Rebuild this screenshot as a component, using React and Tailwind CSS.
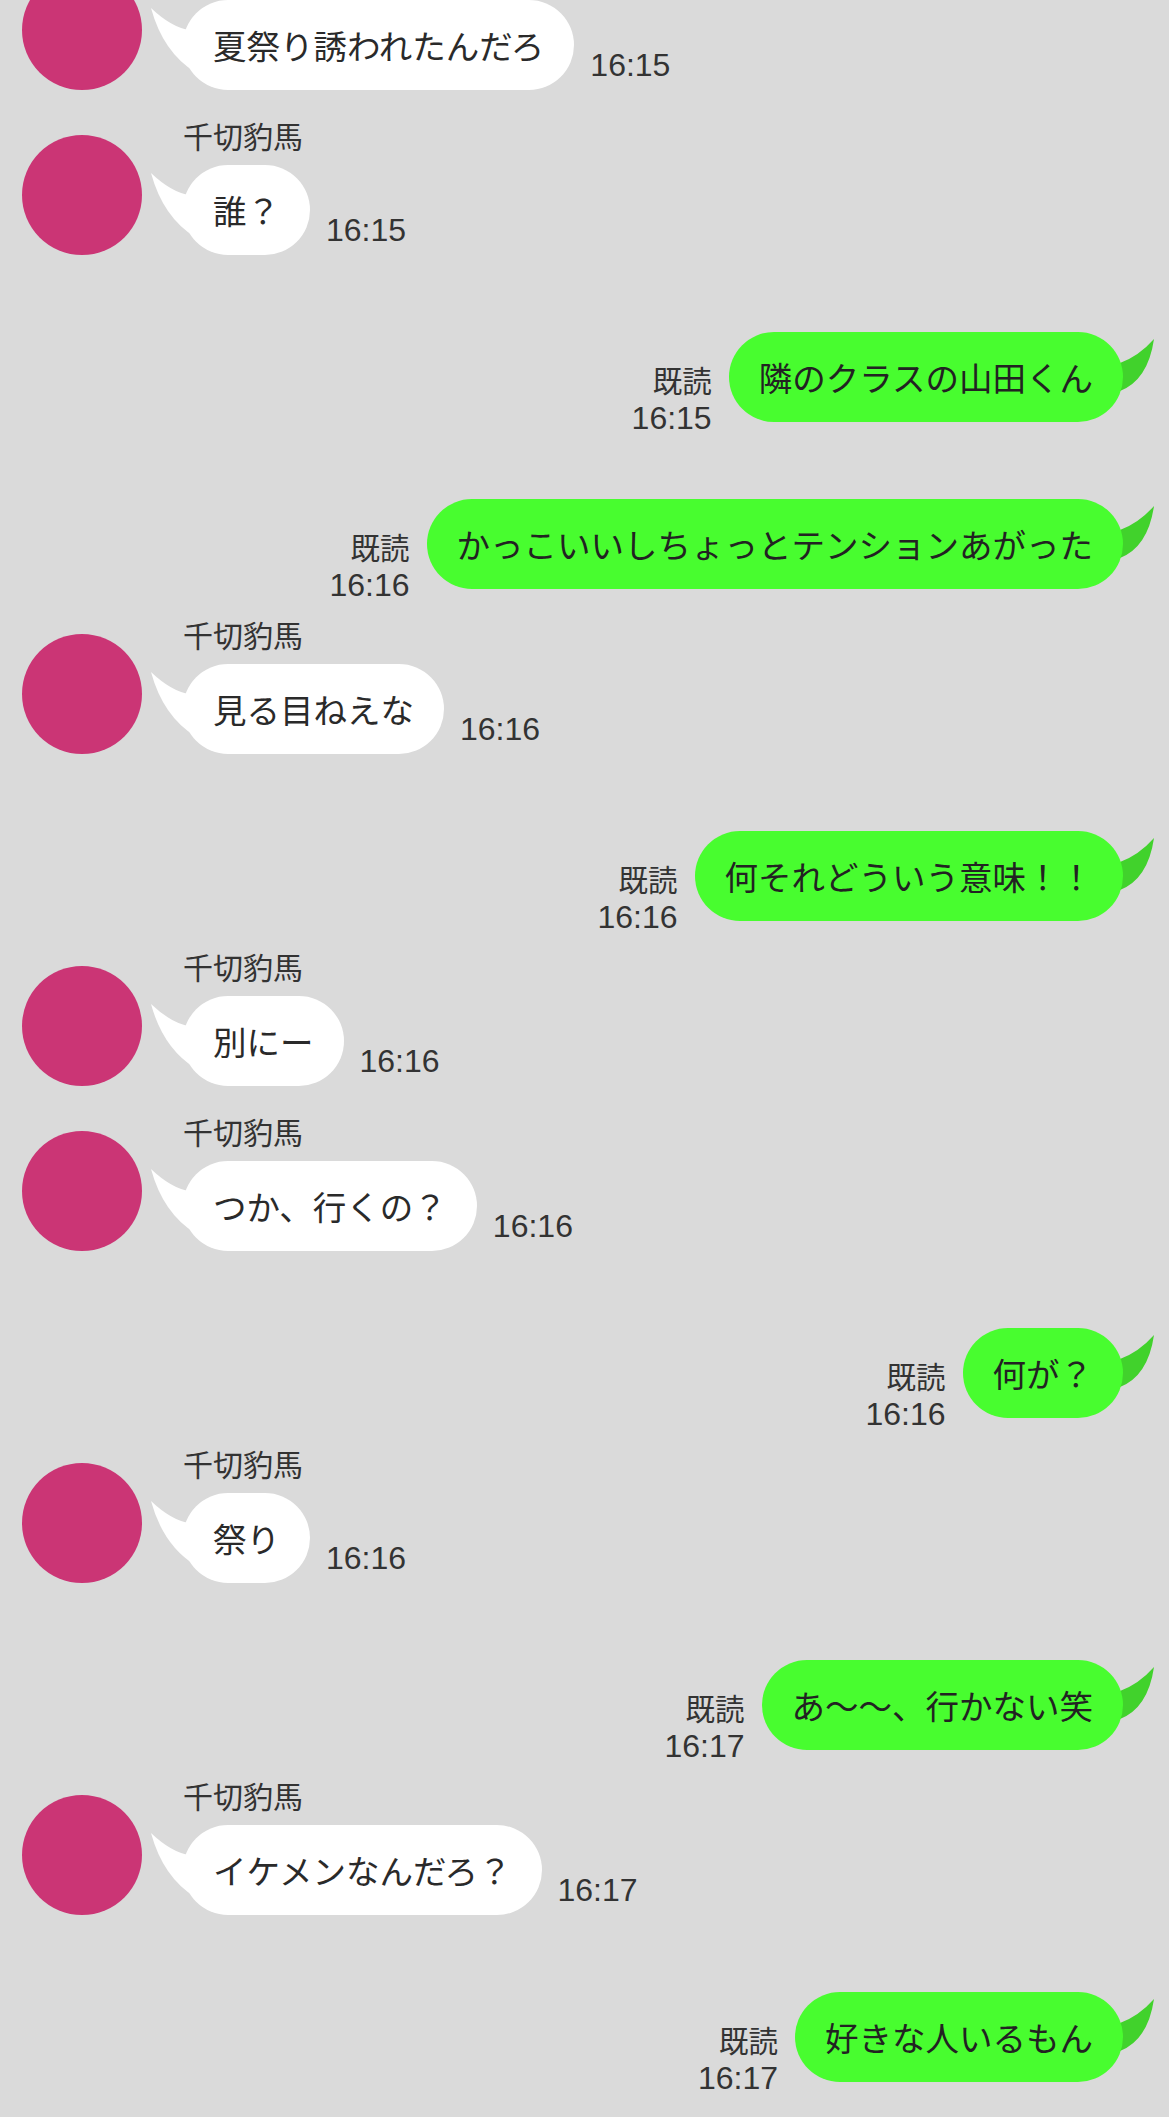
import React from 'react';

const messages = [
  { side: 'left', text: '夏祭り誘われたんだろ', time: '16:15', noName: true },
  { side: 'left', text: '誰？', time: '16:15' },
  { side: 'right', text: '隣のクラスの山田くん', time: '16:15' },
  { side: 'right', text: 'かっこいいしちょっとテンションあがった', time: '16:16' },
  { side: 'left', text: '見る目ねえな', time: '16:16' },
  { side: 'right', text: '何それどういう意味！！', time: '16:16' },
  { side: 'left', text: '別にー', time: '16:16' },
  { side: 'left', text: 'つか、行くの？', time: '16:16' },
  { side: 'right', text: '何が？', time: '16:16' },
  { side: 'left', text: '祭り', time: '16:16' },
  { side: 'right', text: 'あ〜〜、行かない笑', time: '16:17' },
  { side: 'left', text: 'イケメンなんだろ？', time: '16:17' },
  { side: 'right', text: '好きな人いるもん', time: '16:17' },
];

function LeftMessage({ text, time, noName }) {
  return (
    <div className="mt-[30px] flex items-end pl-[22px]">
      <div className="h-[120px] w-[120px] shrink-0 rounded-full bg-[#cb3575]" />
      <div className="ml-[41px] flex flex-col">
        {!noName && <div className="mb-[15px] text-[30px] leading-[30px] text-[#333]">千切豹馬</div>}
        <div className="flex items-end">
          <div className="relative">
            <svg className="absolute left-[-34px] top-0" width="50" height="80" viewBox="0 0 50 80">
              <path d="M2 8 Q22 27 40 30 L46 72 Q14 52 2 8 Z" fill="#fff" />
            </svg>
            <div className="relative whitespace-nowrap rounded-full bg-white px-[30px] py-[22px] text-[33.5px] leading-[46px] text-[#2a2a2a]">
              {text}
            </div>
          </div>
          <span className="mb-[5px] ml-4 font-['Liberation_Sans','Noto_Sans_CJK_JP',sans-serif] text-[32px] leading-[39px] text-[#333]">
            {time}
          </span>
        </div>
      </div>
    </div>
  );
}

function RightMessage({ text, time }) {
  return (
    <div className="mt-[77px] flex items-end justify-end pr-[46px]">
      <div className="mb-[-16px] mr-[17px] flex flex-col items-end text-[#333]">
        <span className="text-[29.5px] leading-[39px]">既読</span>
        <span className="font-['Liberation_Sans','Noto_Sans_CJK_JP',sans-serif] text-[32px] leading-[39px]">{time}</span>
      </div>
      <div className="relative">
        <svg className="absolute right-[-33px] top-0" width="51" height="70" viewBox="0 0 51 70">
          <path d="M49 7 Q34 24 15 31 L15 59 Q43 48 49 7 Z" fill="#41d22c" />
        </svg>
        <div className="relative whitespace-nowrap rounded-full bg-[#48fd2f] px-[30px] py-[22px] text-[33.5px] leading-[46px] text-[#222]">
          {text}
        </div>
      </div>
    </div>
  );
}

export default function App() {
  return (
    <div className="h-[2117px] overflow-hidden bg-[#dadada] font-['Noto_Sans_CJK_JP',sans-serif]">
      <div className="-mt-[60px] flex flex-col">
        {messages.map((m, i) =>
          m.side === 'left' ? (
            <LeftMessage key={i} text={m.text} time={m.time} noName={m.noName} />
          ) : (
            <RightMessage key={i} text={m.text} time={m.time} />
          )
        )}
      </div>
    </div>
  );
}
